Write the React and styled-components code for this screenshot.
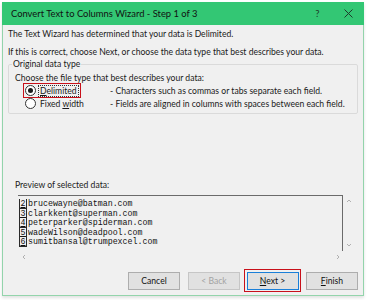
import React from 'react';
import styled, { createGlobalStyle } from 'styled-components';

const GlobalStyle = createGlobalStyle`
  html, body {
    margin: 0;
    padding: 0;
    background: #ffffff;
  }
  body {
    font-family: Lato, 'Noto Sans', sans-serif;
    font-size: 8.6px;
    color: #1a1a1a;
  }
`;

const Page = styled.div`
  width: 367px;
  height: 300px;
  padding: 2px 3px 0 2px;
  box-sizing: border-box;
`;

const Window = styled.div`
  width: 362px;
  height: 294px;
  box-sizing: border-box;
  border: 1px solid #93d4ab;
  border-top: none;
  background: #f0f0f0;
  display: flex;
  flex-direction: column;
  box-shadow: 0 2px 3px rgba(0, 0, 0, 0.12);
`;

const TitleBar = styled.div`
  height: 23px;
  margin: 0 -1px;
  background: #33c774;
  display: flex;
  align-items: center;
  padding: 0 0 0 9px;
  font-size: 9.4px;
  color: #111;
`;

const Title = styled.span`
  flex: 1;
`;

const TitleButton = styled.span`
  width: 31px;
  height: 23px;
  display: flex;
  align-items: center;
  justify-content: center;
  color: #1d3b2a;
  font-size: 9.5px;
`;

const Body = styled.div`
  flex: 1;
  padding: 0 5px;
  display: flex;
  flex-direction: column;
`;

const Line = styled.div`
  height: 12px;
  line-height: 12px;
  margin-top: ${(p) => p.$top || 0}px;
  margin-left: ${(p) => p.$left || 0}px;
  white-space: nowrap;
`;

const Group = styled.fieldset`
  margin: 0;
  padding: 0 6px 3px;
  border: 1px solid #dadada;
  border-radius: 2px;
`;

const Legend = styled.legend`
  margin-left: -3px;
  padding: 0 1px;
  height: 12px;
  line-height: 12px;
`;

const RadioRow = styled.div`
  height: 13px;
  display: flex;
  align-items: center;
  white-space: nowrap;
`;

const RadioCell = styled.span`
  width: 75px;
  padding-left: 11px;
  display: flex;
  align-items: center;
`;

const Highlight = styled.span`
  display: inline-flex;
  align-items: center;
  gap: 3px;
  padding: 1px 2px 1px 1px;
  margin-left: -3px;
  border: 1.5px solid ${(p) => (p.$on ? '#c8101a' : 'transparent')};
`;

const Radio = styled.span`
  width: 9px;
  height: 9px;
  border-radius: 50%;
  border: 1px solid #333;
  background: #fff;
  display: flex;
  align-items: center;
  justify-content: center;
  &::after {
    content: '';
    width: 5px;
    height: 5px;
    border-radius: 50%;
    background: ${(p) => (p.$checked ? '#1a1a1a' : 'transparent')};
  }
`;

const RadioLabel = styled.span`
  outline: ${(p) => (p.$focus ? '1px dotted #333' : 'none')};
  padding: 0 1px;
  line-height: 10px;
`;

const Under = styled.u`
  text-decoration-thickness: 1px;
  text-underline-offset: 1px;
`;

const Desc = styled.span`
  margin-left: 9px;
`;

const Preview = styled.div`
  margin-top: 4px;
  margin-left: 10px;
  display: grid;
  grid-template-columns: 325px 12px;
  grid-template-rows: 56px 12px;
`;

const Sheet = styled.div`
  border-top: 1px solid #6b6b6b;
  border-right: 1px solid #6b6b6b;
  padding-top: 3px;
  overflow: hidden;
`;

const Row = styled.div`
  height: 9.6px;
  display: flex;
  align-items: stretch;
  font-family: 'Liberation Mono', monospace;
  font-size: 8.3px;
  line-height: 9.6px;
  color: #111;
`;

const Num = styled.span`
  width: 8px;
  margin-left: 1px;
  box-sizing: border-box;
  border: 1px solid #2a2a2a;
  border-top: none;
  text-align: center;
  text-decoration: underline;
  text-underline-offset: 1px;
`;

const Cell = styled.span`
  padding-left: 1px;
`;

const VScroll = styled.div`
  display: flex;
  flex-direction: column;
  justify-content: space-between;
  align-items: center;
  padding: 3px 0;
`;

const HScroll = styled.div`
  display: flex;
  justify-content: space-between;
  align-items: center;
  padding: 0 2px 0 3px;
`;

const Arrow = styled.svg`
  width: 6px;
  height: 6px;
  display: block;
`;

const Buttons = styled.div`
  margin-top: auto;
  margin-bottom: 3px;
  display: flex;
  justify-content: flex-end;
  align-items: center;
  gap: 8px;
`;

const Button = styled.button`
  width: 52px;
  height: 18px;
  padding: 0;
  box-sizing: border-box;
  font-family: inherit;
  font-size: 8.6px;
  background: #e1e1e1;
  color: ${(p) => (p.disabled ? '#a3a3a3' : '#111')};
  border: ${(p) =>
    p.$default ? '1.5px solid #1a7fd8' : p.disabled ? '1px solid #c6c6c6' : '1px solid #adadad'};
  border-radius: 0;
`;

const RedBox = styled.span`
  display: inline-flex;
  padding: 1.5px;
  border: 1.5px solid #c8101a;
  margin: 0 -3px 0 -4px;
`;

const arrowPaths = {
  up: 'M1 4 L3 2 L5 4',
  down: 'M1 2 L3 4 L5 2',
  left: 'M4 1 L2 3 L4 5',
  right: 'M2 1 L4 3 L2 5',
};

const ArrowIcon = ({ dir }) => (
  <Arrow viewBox="0 0 6 6">
    <path d={arrowPaths[dir]} fill="none" stroke="#a8a8a8" strokeWidth="0.9" />
  </Arrow>
);

const rows = [
  ['2', 'brucewayne@batman.com'],
  ['3', 'clarkkent@superman.com'],
  ['4', 'peterparker@spiderman.com'],
  ['5', 'wadeWilson@deadpool.com'],
  ['6', 'sumitbansal@trumpexcel.com'],
];

export default function App() {
  return (
    <Page>
      <GlobalStyle />
      <Window>
        <TitleBar>
          <Title>Convert Text to Columns Wizard - Step 1 of 3</Title>
          <TitleButton>?</TitleButton>
          <TitleButton>
            <svg width="9" height="9" viewBox="0 0 9 9">
              <path d="M0.5 0.5 L8.5 8.5 M8.5 0.5 L0.5 8.5" stroke="#1d3b2a" strokeWidth="1" />
            </svg>
          </TitleButton>
        </TitleBar>
        <Body>
          <Line $top={3}>The Text Wizard has determined that your data is Delimited.</Line>
          <Line $top={6}>
            If this is correct, choose Next, or choose the data type that best describes your data.
          </Line>
          <Group>
            <Legend>Original data type</Legend>
            <Line $top={2}>Choose the file type that best describes your data:</Line>
            <RadioRow>
              <RadioCell>
                <Highlight $on>
                  <Radio $checked />
                  <RadioLabel $focus>
                    <Under>D</Under>elimited
                  </RadioLabel>
                </Highlight>
              </RadioCell>
              <Desc>- Characters such as commas or tabs separate each field.</Desc>
            </RadioRow>
            <RadioRow>
              <RadioCell>
                <Highlight>
                  <Radio />
                  <RadioLabel>
                    Fixed <Under>w</Under>idth
                  </RadioLabel>
                </Highlight>
              </RadioCell>
              <Desc>- Fields are aligned in columns with spaces between each field.</Desc>
            </RadioRow>
          </Group>
          <Line $top={65} $left={7}>Preview of selected data:</Line>
          <Preview>
            <Sheet>
              {rows.map(([n, text]) => (
                <Row key={n}>
                  <Num>{n}</Num>
                  <Cell>{text}</Cell>
                </Row>
              ))}
            </Sheet>
            <VScroll>
              <ArrowIcon dir="up" />
              <ArrowIcon dir="down" />
            </VScroll>
            <HScroll>
              <ArrowIcon dir="left" />
              <ArrowIcon dir="right" />
            </HScroll>
            <div />
          </Preview>
          <Buttons>
            <Button>Cancel</Button>
            <Button disabled>&lt; Back</Button>
            <RedBox>
              <Button $default>
                <Under>N</Under>ext &gt;
              </Button>
            </RedBox>
            <Button>
              <Under>F</Under>inish
            </Button>
          </Buttons>
        </Body>
      </Window>
    </Page>
  );
}
